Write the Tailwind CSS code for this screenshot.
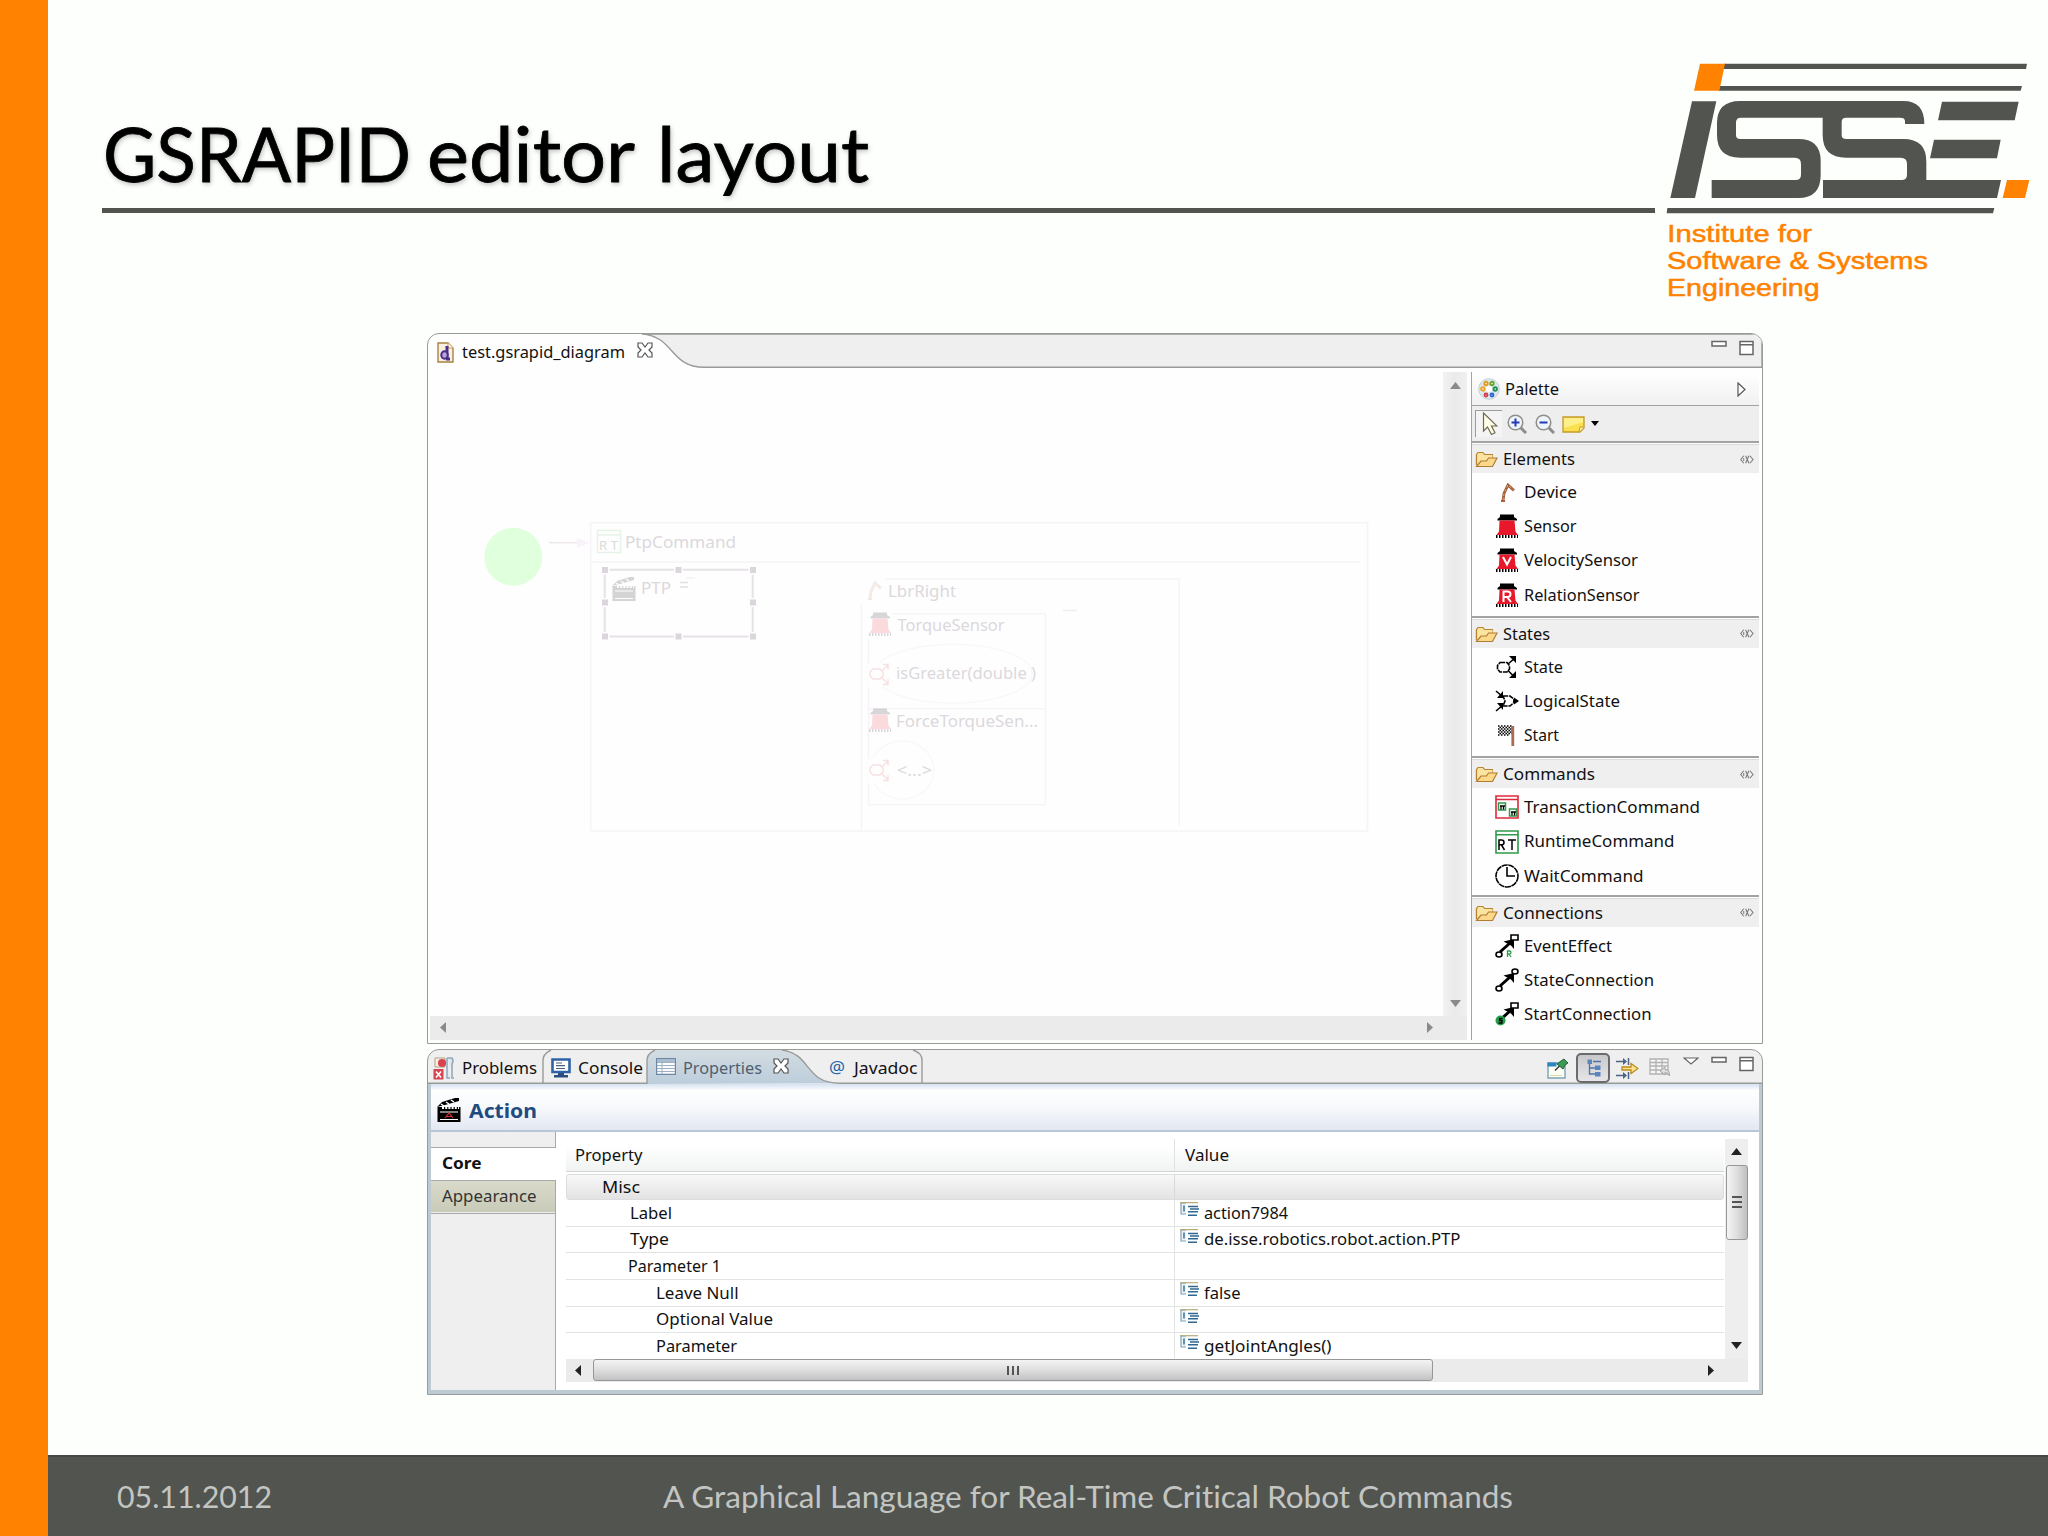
<!DOCTYPE html>
<html lang="en">
<head>
<meta charset="utf-8">
<title>GSRAPID editor layout</title>
<script src="https://cdn.jsdelivr.net/npm/@tailwindcss/browser@4"></script>
</head>
<body class="w-[2048px] h-[1536px] overflow-hidden bg-[#fdfffc]">
<svg class="hidden">
  <symbol id="folder" viewBox="0 0 23 17"><path d="M1.5 14V3.5L3 1.5h5L9.500 3.500h8V7" fill="#fbe3a2" stroke="#b8842f" stroke-width="1.200"/><path d="M1.500 14.500V4h16v3.500L11 12.500z" fill="#fbe3a2"/><path d="M1.500 15.500L6 10h5.500L13.500 7H22l-4.500 8.500z" fill="#fcd98a" stroke="#b07d33" stroke-width="1.200"/><path d="M1.500 14V3.500" stroke="#b8842f" stroke-width="1.200"/></symbol>
  <symbol id="pin" viewBox="0 0 15 11"><path d="M4 1.500L.8 5.500 4 9.500M4 3.800v3.400M6 1.500l3.500 8M9.500 1.500L6 9.500M10.500 1.500l3.500 4-3.500 4" fill="none" stroke="#777" stroke-width="1.100"/></symbol>
  <symbol id="device" viewBox="0 0 24 24"><path d="M8 20.500l1-7 4-8.500 6 5.500" fill="none" stroke="#9c5a34" stroke-width="2.800"/><path d="M8 20.500l1-7 4-8.500 6 5.500" fill="none" stroke="#e6a272" stroke-width="1" stroke-dasharray="3 1.500"/><path d="M6 21h4" stroke="#b0603a" stroke-width="2"/></symbol>
  <symbol id="sensor" viewBox="0 0 24 24"><path d="M5 .5h14v2.500l3 2v1.500H2.500V5L5 3z" fill="#000"/><path d="M4.500 6.500h15l1 11 2.500 3.500H1.500L4 17.500z" fill="#e8182a"/><path d="M1 22.500h22" stroke="#000" stroke-width="3" stroke-dasharray="1.500 1.500"/></symbol>
  <symbol id="state" viewBox="0 0 24 24"><path d="M5 7.500h7l2.500 3v3.500L12 17H5l-2.500-3v-3.500z" fill="none" stroke="#000" stroke-width="1.600" stroke-dasharray="5 .8"/><path d="M13 9l7-6M13 15.500l5 5" stroke="#000" stroke-width="1.600"/><path d="M14 1h7v7zM14 23h7v-7z" fill="#000"/></symbol>
  <symbol id="lstate" viewBox="0 0 24 24"><path d="M8 7h7l4 3v3.500L15 17H8l2-5z" fill="none" stroke="#000" stroke-width="1.600" stroke-dasharray="5 .8"/><path d="M1 2l7 6M1 22l7-6M18 12h5" stroke="#000" stroke-width="1.600"/><path d="M8 2v7H2zM8 21v-7H2zM19 8.500l5 3.500-5 3.500z" fill="#000"/></symbol>
  <symbol id="clap" viewBox="0 0 24 24"><path d="M.5 9h23v15H.5z" fill="#000"/><path d="M0 9L5 4l13-4h4v3L8 7z" fill="#000"/><path d="M4 6l3 2M9 4l3 2M14 2l3 2" stroke="#fff" stroke-width="1.500"/><path d="M5 10h17" stroke="#fff" stroke-width="2" stroke-dasharray="2 1.200"/><path d="M3 14h18M3 21.500h18" stroke="#fff" stroke-width="1.200"/></symbol>
  <symbol id="field" viewBox="0 0 19 16"><path d="M6 1H1v11h5" fill="#eaf4f6" stroke="#7fa2b4" stroke-width="1.200"/><path d="M0 .7h18" stroke="#b3ae7a" stroke-width="1.200"/><path d="M4 3.500v6M8 4.500h10M10 7h9M8 9.800h10M8 13.200h9" stroke="#2f6790" stroke-width="1.400"/></symbol>
  <symbol id="arr" viewBox="0 0 24 24"><path d="M5 18L15 9" stroke="#000" stroke-width="3"/><path d="M8.500 7.500L19 5v10l-3-3.500z" fill="#000"/></symbol>
  <symbol id="glass" viewBox="0 0 20 20"><path d="M13 13l6 6" stroke="#8c8c8c" stroke-width="3"/><circle cx="8.500" cy="8.500" r="7.300" fill="#eef4fb" stroke="#8f8f88" stroke-width="1.500"/></symbol>
</svg>

<div class="flex h-[1536px] w-[2048px] font-['Noto_Sans',sans-serif] text-[16.3px] leading-none text-[#111]">
  <aside class="w-12 shrink-0 bg-[#ff8200]"></aside>
  <div class="flex w-[2000px] flex-col">

    <header class="flex h-[333px] shrink-0 pl-[54px]">
      <div class="flex h-[212.600px] w-[1553px] items-end border-b-[5px] border-[#51544f]">
        <h1 class="flex pb-[11px] pl-[1px] text-[75px] leading-[88px] text-black font-[family-name:Lato,sans-serif] [-webkit-text-stroke:0.8px_black] [text-shadow:1px_2px_5px_rgba(0,0,0,0.28)]"><span class="w-[324px] shrink-0"><span class="inline-block origin-left whitespace-nowrap" data-w="308">GSRAPID</span> </span><span class="w-[230px] shrink-0"><span class="inline-block origin-left whitespace-nowrap" data-w="208">editor</span> </span><span class="inline-block origin-left whitespace-nowrap" data-w="212">layout</span></h1>
      </div>
      <svg class="mt-10 h-[280px] w-[393px] shrink-0" viewBox="45 0 1179 840">
        <g fill="#51544f">
          <path d="M252 71H1161L1158 87H249zM240 138H1146L1142 152H236zM82 504H1063L1059 520H80zM156 184H229L165 474H91z"/>
          <path d="M906 185H1136L1124 241H894zM882 299H1082L1071 355H870z"/>
          <path fill-rule="evenodd" d="M300 183H790Q853 183 853 252H795V243Q795 233 780 233H618Q605 233 605 246V285Q605 297 618 297H790Q859 297 859 365V420H1083L1071 474H549V420H785Q801 420 801 404V372Q801 353 782 353H618Q548 353 548 285V233H302Q288 233 288 247V285Q288 297 300 297H475Q542 297 542 362V405Q542 474 475 474H215V420H467Q483 420 483 404V372Q483 353 464 353H300Q231 353 231 285V250Q231 183 300 183z"/>
        </g>
        <path fill="#ff8200" d="M180 71H255L238 152H162zM1101 420H1168L1155 474H1088z"/>
        <g fill="#ff8200" stroke="#ff8200" stroke-width="1.600" font-family="Liberation Sans, Arial, sans-serif" font-size="74">
          <text x="82" y="606" textLength="434" lengthAdjust="spacingAndGlyphs">Institute for</text>
          <text x="81" y="688" textLength="783" lengthAdjust="spacingAndGlyphs">Software &amp; Systems</text>
          <text x="81" y="769" textLength="458" lengthAdjust="spacingAndGlyphs">Engineering</text>
        </g>
      </svg>
    </header>

    <main class="flex h-[1122px] shrink-0 flex-col gap-[5px] pl-[379px]">

      <!-- Diagram editor -->
      <section class="flex h-[711px] w-[1336px] flex-col overflow-hidden rounded-t-[12px] border-[1.500px] border-[#999b98] bg-[#fefefe]">
        <div class="relative h-[34px] shrink-0">
          <svg class="absolute inset-0" width="1334" height="34" viewBox="0 0 1334 34"><path d="M214 0C246 2 242 33.300 276 33.300H1334V0z" fill="#eeefee" stroke="#999b98" stroke-width="1.400"/></svg>
          <div class="relative flex h-full items-center pl-[9px] pr-[7px] pt-[2px]">
            <svg class="h-[21px] w-[17px]" viewBox="0 0 17 21"><path d="M1 1h10l5 5v14H1z" fill="#f6efe4" stroke="#a8823e" stroke-width="1.400"/><path d="M11 1v5h5" fill="#fff" stroke="#c99b4a"/><path d="M10 4v13M13 17H9" stroke="#4a2d86" stroke-width="3"/><ellipse cx="7.500" cy="13" rx="3.200" ry="3.800" fill="#b9a5dd" stroke="#4a2d86" stroke-width="2"/></svg>
            <span class="ml-[8px] w-[175px] shrink-0"><span class="inline-block origin-left whitespace-nowrap" data-w="163">test.gsrapid_diagram</span></span>
            <svg class="mb-1 h-[16px] w-[16px]" viewBox="0 0 16 16"><path d="M1 1h4l3 4 3-4h4v4l-3 3 3 3v4h-4l-3-4-3 4H1v-4l3-3-3-3z" fill="#fff" stroke="#555" stroke-width="1.200"/></svg>
            <svg class="ml-auto mb-[8px] h-[16px] w-[44px]" viewBox="0 0 44 16"><path d="M1 1.500h14v4.500H1zM29 1.500h13v13H29zM29 4.800h13" fill="#fff" stroke="#666" stroke-width="1.500"/></svg>
          </div>
        </div>
        <div class="flex h-[675px] pt-[4px]">
          <div class="flex w-[1039px] shrink-0 flex-col pl-[2px]">
            <div class="flex h-[644px]">
              <svg class="h-[644px] w-[1013px]" viewBox="430 372 1013 644" font-family="Noto Sans, sans-serif" font-size="16.300" fill="#dcd8dc">
                <circle cx="513.300" cy="556.700" r="29" fill="#e0ffdc"/>
                <path d="M549 542.700h30" stroke="#eee8ee" stroke-width="1.500"/><path d="M577 538l13 4.700-13 4.700z" fill="#f7f3f8"/>
                <g fill="none" stroke="#f7f3f8" stroke-width="1.500"><path d="M590.700 522.700H1367.500V831H590.700zM592 562H1360M881 579H1179.300V826M861.400 603V831M1045.400 613.700V804.700H868.600V640M892 613.700H1045.400M868.600 708.700H1045.400"/><path d="M1063 610.500h14" stroke="#eee"/><ellipse cx="953" cy="673.700" rx="79" ry="29.500" stroke="#faf7fb"/><ellipse cx="902" cy="770" rx="32" ry="29" stroke="#faf7fb"/></g>
                <path d="M597.500 530.500h23v22h-23zM597.500 535h23" fill="#fefefe" stroke="#e6f3e8" stroke-width="1.500"/>
                <text x="599" y="549.500" font-size="13" textLength="19" >RT</text>
                <text x="625" y="548" textLength="111" lengthAdjust="spacingAndGlyphs">PtpCommand</text>
                <path d="M604.700 569.700h148v66.800h-148z" fill="none" stroke="#e6e2e7" stroke-width="2"/>
                <g fill="#dad6dc" stroke="#fefefe" stroke-width="3" paint-order="stroke"><path d="M602 567h6v6h-6zM675.500 567h6v6h-6zM750 567h6v6h-6zM602 599.500h6v6h-6zM750 599.500h6v6h-6zM602 633.500h6v6h-6zM675.500 633.500h6v6h-6zM750 633.500h6v6h-6z"/></g>
                <use href="#clap" x="612" y="577" width="24" height="24" opacity=".16"/>
                <text x="641" y="594" textLength="30" lengthAdjust="spacingAndGlyphs">PTP</text>
                <path d="M680 582.500h8M680 587h8" stroke="#e3dfe4" stroke-width="1.400"/><path d="M686 578h9" stroke="#f3f0f4" stroke-width="1.400"/>
                <rect x="866" y="578" width="20" height="24" fill="#fefefe"/><use href="#device" x="862" y="578" width="24" height="24" opacity=".13"/>
                <text x="888" y="596.500" textLength="68" lengthAdjust="spacingAndGlyphs">LbrRight</text>
                <use href="#sensor" x="868" y="612" width="24" height="24" opacity=".15"/>
                <text x="897.500" y="630.500" textLength="107" lengthAdjust="spacingAndGlyphs">TorqueSensor</text>
                <rect x="867" y="663" width="24" height="24" fill="#fefefe"/>
                <path d="M873 669h7l3 3v4l-3 3h-7l-3-3v-4zM882 671l6-6M882 678l6 6M883 664.500h5v5M888 679v5.500h-5" fill="none" stroke="#f8e0e2" stroke-width="1.400"/>
                <text x="896" y="679" textLength="140" lengthAdjust="spacingAndGlyphs">isGreater(double )</text>
                <use href="#sensor" x="868" y="708" width="24" height="24" opacity=".15"/>
                <text x="896" y="727" textLength="142" lengthAdjust="spacingAndGlyphs">ForceTorqueSen...</text>
                <rect x="867" y="759" width="24" height="24" fill="#fefefe"/>
                <path d="M873 765h7l3 3v4l-3 3h-7l-3-3v-4zM882 767l6-6M882 774l6 6M883 760.500h5v5M888 775v5.500h-5" fill="none" stroke="#f8e0e2" stroke-width="1.400"/>
                <text x="897" y="775.500" textLength="35" lengthAdjust="spacingAndGlyphs">&lt;...&gt;</text>
              </svg>
              <div class="flex w-[24px] flex-col items-center justify-between bg-linear-to-r from-[#f3f2f3] via-[#ebeaeb] to-[#f1f0f1] pt-[10px] pb-[9px]">
                <svg width="11" height="7" viewBox="0 0 11 7"><path d="M0 7L5.500 0 11 7z" fill="#8a8a8a"/></svg>
                <svg width="11" height="7" viewBox="0 0 11 7"><path d="M0 0L5.500 7 11 0z" fill="#8a8a8a"/></svg>
              </div>
            </div>
            <div class="flex h-[24px] w-[1037px] items-center justify-between bg-[#ecebec] pl-[10px] pr-[34px] pb-[2px]">
              <svg width="6" height="11" viewBox="0 0 6 11"><path d="M6 0L0 5.500 6 11z" fill="#8a8a8a"/></svg>
              <svg width="6" height="11" viewBox="0 0 6 11"><path d="M0 0L6 5.500 0 11z" fill="#8a8a8a"/></svg>
            </div>
          </div>

          <!-- Palette -->
          <div class="ml-[4px] flex h-[668px] w-[288px] flex-col border-l-[1.500px] border-[#a3a3a3]">
            <div class="flex h-[34px] shrink-0 items-center border-b-[1.500px] border-[#a3a3a3] bg-linear-to-b from-white to-[#f1f1f1] pl-[6px]">
              <svg class="h-[22px] w-[22px]" viewBox="0 0 22 22"><circle cx="11" cy="11" r="10.300" fill="#dbe8ee" stroke="#c3cfdb"/><circle cx="11" cy="11" r="3" fill="#fff"/><g fill="#fff" stroke-width="1.900"><circle cx="8" cy="5.500" r="1.700" stroke="#e79b1f"/><circle cx="14" cy="5.500" r="1.700" stroke="#6aa52c"/><circle cx="4.800" cy="11" r="1.700" stroke="#efa51d"/><circle cx="17.200" cy="11" r="1.700" stroke="#23914e"/><circle cx="8" cy="17" r="1.500" stroke="#d5394a"/><circle cx="14" cy="17" r="1.500" stroke="#2d66c9"/></g></svg>
              <span class="ml-[5px] mt-[2px]"><span class="inline-block origin-left whitespace-nowrap" data-w="54">Palette</span></span>
              <svg class="mr-[13px] ml-auto mt-[2px]" width="9" height="15" viewBox="0 0 9 15"><path d="M1 1l7 6.500L1 14z" fill="#fff" stroke="#555" stroke-width="1.200"/></svg>
            </div>
            <div class="flex h-[35px] shrink-0 items-center bg-[#efeeef] pl-[3px]">
              <div class="flex h-[27px] w-[27px] items-center justify-center border-t-[1.500px] border-l-[1.500px] border-[#9c9c9c] bg-[#f5f4f5] pl-[2px]"><svg width="16" height="24" viewBox="0 0 16 24"><path d="M1.500 1v18l4-4 4 7.500 3.500-1.800L9.500 14H15z" fill="#fffde8" stroke="#6d6a50" stroke-width="1.200"/></svg></div>
              <svg class="ml-[5px] h-[20px] w-[20px]" viewBox="0 0 20 20"><use href="#glass"/><path d="M4.500 8.500h8M8.500 4.500v8" stroke="#2438b4" stroke-width="2"/></svg>
              <svg class="ml-[8px] h-[20px] w-[20px]" viewBox="0 0 20 20"><use href="#glass"/><path d="M4.500 8.500h8" stroke="#2438b4" stroke-width="2"/></svg>
              <svg class="ml-[7px] mt-[2px] h-[17px] w-[23px]" viewBox="0 0 23 17"><path d="M1 1h21v11l-4 4H1z" fill="#fbe04d" stroke="#c59a2b" stroke-width="1.300"/><path d="M2 2h19v4L2 12z" fill="#fdf08c"/><path d="M17 16l1-5h4" fill="#fff5b5" stroke="#c59a2b"/></svg>
              <svg class="ml-[6px]" width="8" height="5" viewBox="0 0 8 5"><path d="M0 0h8L4 5z" fill="#000"/></svg>
            </div>

            <div class="border-t-[2px] border-[#a3a3a3] pb-[3px]">
              <div class="mt-[1px] mb-[2px] flex h-[29px] items-center border-t border-[#dcdcdc] bg-[#f0eff0] pl-[3px] pr-[5px]"><svg class="mt-[1px] h-[17px] w-[23px]"><use href="#folder"/></svg><span class="ml-[5px]"><span class="inline-block origin-left whitespace-nowrap" data-w="72">Elements</span></span><svg class="ml-auto h-[11px] w-[14px]"><use href="#pin"/></svg></div>
              <div class="flex h-[34.200px] items-center gap-[5px] pl-[23px]"><svg class="h-[24px] w-[24px]"><use href="#device"/></svg><span><span class="inline-block origin-left whitespace-nowrap" data-w="53">Device</span></span></div>
              <div class="flex h-[34.200px] items-center gap-[5px] pl-[23px]"><svg class="h-[24px] w-[24px]"><use href="#sensor"/></svg><span><span class="inline-block origin-left whitespace-nowrap" data-w="52.500">Sensor</span></span></div>
              <div class="flex h-[34.200px] items-center gap-[5px] pl-[23px]"><svg class="h-[24px] w-[24px]"><use href="#sensor"/><path d="M8 9l4 7.500L16 9" fill="none" stroke="#fff" stroke-width="2"/></svg><span><span class="inline-block origin-left whitespace-nowrap" data-w="114">VelocitySensor</span></span></div>
              <div class="flex h-[34.200px] items-center gap-[5px] pl-[23px]"><svg class="h-[24px] w-[24px]"><use href="#sensor"/><path d="M8.500 19V8.500h4q3 0 3 2.700t-3 2.700h-4M12 14l4 5" fill="none" stroke="#fff" stroke-width="2"/></svg><span><span class="inline-block origin-left whitespace-nowrap" data-w="115.500">RelationSensor</span></span></div>
            </div>
            <div class="mt-[1px] border-t-[2px] border-[#a3a3a3] pb-[3px]">
              <div class="mt-[1px] mb-[2px] flex h-[29px] items-center border-t border-[#dcdcdc] bg-[#f0eff0] pl-[3px] pr-[5px]"><svg class="mt-[1px] h-[17px] w-[23px]"><use href="#folder"/></svg><span class="ml-[5px]"><span class="inline-block origin-left whitespace-nowrap" data-w="47">States</span></span><svg class="ml-auto h-[11px] w-[14px]"><use href="#pin"/></svg></div>
              <div class="flex h-[34.200px] items-center gap-[5px] pl-[23px]"><svg class="h-[24px] w-[24px]"><use href="#state"/></svg><span><span class="inline-block origin-left whitespace-nowrap" data-w="39">State</span></span></div>
              <div class="flex h-[34.200px] items-center gap-[5px] pl-[23px]"><svg class="h-[24px] w-[24px]"><use href="#lstate"/></svg><span><span class="inline-block origin-left whitespace-nowrap" data-w="96">LogicalState</span></span></div>
              <div class="flex h-[34.200px] items-center gap-[5px] pl-[23px]"><svg class="h-[24px] w-[24px]" viewBox="0 0 24 24"><path d="M3 3h14M3 6h14M3 9h14M3 12h12" stroke="#000" stroke-width="1.500" stroke-dasharray="1.500 1.500"/><path d="M4.500 4.500h13M4.500 7.500h13M4.500 10.500h13" stroke="#000" stroke-width="1.500" stroke-dasharray="1.500 1.500"/><path d="M17.800 3v20" stroke="#a96c55" stroke-width="2.800"/></svg><span><span class="inline-block origin-left whitespace-nowrap" data-w="35">Start</span></span></div>
            </div>
            <div class="mt-[1px] border-t-[2px] border-[#a3a3a3] pb-[2px]">
              <div class="mt-[1px] mb-[2px] flex h-[29px] items-center border-t border-[#dcdcdc] bg-[#f0eff0] pl-[3px] pr-[5px]"><svg class="mt-[1px] h-[17px] w-[23px]"><use href="#folder"/></svg><span class="ml-[5px]"><span class="inline-block origin-left whitespace-nowrap" data-w="92">Commands</span></span><svg class="ml-auto h-[11px] w-[14px]"><use href="#pin"/></svg></div>
              <div class="flex h-[34.200px] items-center gap-[5px] pl-[23px]"><svg class="h-[24px] w-[24px]" viewBox="0 0 24 24"><path d="M1 1h22v22H1zM1 4.500h22" fill="#fff" stroke="#e0293d" stroke-width="1.600"/><path d="M3.500 8h7v7h-7zM14.500 14h7v7h-7z" fill="#fff" stroke="#2f9a4b" stroke-width="1.500"/><path d="M5 11h5M6 11v3.500M8.500 11v3.500M16 17h5M17 17v3.500M19.500 17v3.500" stroke="#000" stroke-width="1.300"/></svg><span><span class="inline-block origin-left whitespace-nowrap" data-w="176">TransactionCommand</span></span></div>
              <div class="flex h-[34.200px] items-center gap-[5px] pl-[23px]"><svg class="h-[24px] w-[24px]" viewBox="0 0 24 24"><path d="M1 1h22v22H1zM1 4.800h22" fill="#fff" stroke="#2f9a4b" stroke-width="1.600"/><path d="M4 20v-10h2.500q2.500 0 2.500 2.400t-2.500 2.400H4M6.500 15l3 5M13 10h8M17 10v10" fill="none" stroke="#000" stroke-width="1.500"/></svg><span><span class="inline-block origin-left whitespace-nowrap" data-w="150.500">RuntimeCommand</span></span></div>
              <div class="flex h-[34.200px] items-center gap-[5px] pl-[23px]"><svg class="h-[24px] w-[24px]" viewBox="0 0 24 24"><circle cx="12" cy="12" r="11" fill="#fff" stroke="#000" stroke-width="1.600" stroke-dasharray="6 .6"/><path d="M12 3v9h8" fill="none" stroke="#000" stroke-width="1.600"/></svg><span><span class="inline-block origin-left whitespace-nowrap" data-w="119.500">WaitCommand</span></span></div>
            </div>
            <div class="border-t-[2px] border-[#a3a3a3]">
              <div class="mt-[1px] mb-[2px] flex h-[29px] items-center border-t border-[#dcdcdc] bg-[#f0eff0] pl-[3px] pr-[5px]"><svg class="mt-[1px] h-[17px] w-[23px]"><use href="#folder"/></svg><span class="ml-[5px]"><span class="inline-block origin-left whitespace-nowrap" data-w="100">Connections</span></span><svg class="ml-auto h-[11px] w-[14px]"><use href="#pin"/></svg></div>
              <div class="flex h-[34.200px] items-center gap-[5px] pl-[23px]"><svg class="h-[24px] w-[24px]" viewBox="0 0 24 24"><use href="#arr"/><path d="M16 1h7v5h-7z" fill="#fff" stroke="#000" stroke-width="1.600"/><ellipse cx="4" cy="20.500" rx="3" ry="2.500" fill="#fff" stroke="#000" stroke-width="1.600"/><path d="M12.500 23v-6h2q1.500 0 1.500 1.500T14.500 20h-2M14 20l2 3" fill="none" stroke="#2f9a4b" stroke-width="1.300"/></svg><span><span class="inline-block origin-left whitespace-nowrap" data-w="88">EventEffect</span></span></div>
              <div class="flex h-[34.200px] items-center gap-[5px] pl-[23px]"><svg class="h-[24px] w-[24px]" viewBox="0 0 24 24"><use href="#arr"/><ellipse cx="20" cy="3.500" rx="3" ry="2.500" fill="#fff" stroke="#000" stroke-width="1.600"/><ellipse cx="4" cy="20.500" rx="3" ry="2.500" fill="#fff" stroke="#000" stroke-width="1.600"/></svg><span><span class="inline-block origin-left whitespace-nowrap" data-w="130">StateConnection</span></span></div>
              <div class="flex h-[34.200px] items-center gap-[5px] pl-[23px]"><svg class="h-[24px] w-[24px]" viewBox="0 0 24 24"><use href="#arr"/><path d="M16 1h7v5h-7z" fill="#fff" stroke="#000" stroke-width="1.600"/><circle cx="5.500" cy="18.500" r="5" fill="#25a04a"/><path d="M7.500 16.500h-3v2h2.500v2.500H3.500" fill="none" stroke="#000" stroke-width="1.300"/></svg><span><span class="inline-block origin-left whitespace-nowrap" data-w="127.500">StartConnection</span></span></div>
            </div>
          </div>
        </div>
      </section>

      <!-- Properties view -->
      <section class="flex h-[346px] w-[1336px] flex-col overflow-hidden rounded-t-[12px] border-[1.500px] border-[#999b98] bg-[#f0eff0]">
        <div class="relative h-[34px] shrink-0">
          <svg class="absolute inset-0" width="1334" height="34" viewBox="0 0 1334 34"><defs><linearGradient id="tabg" x2="0" y2="1"><stop stop-color="#d3dce2"/><stop offset="1" stop-color="#bccddb"/></linearGradient></defs><path d="M219 34V10Q219 4 227 0H354C384 4 376 33.300 412 33.300z" fill="url(#tabg)"/><path d="M0 33.300H219V10Q219 4 227 0M354 0C384 4 376 33.300 412 33.300H1334M115 33.300V10Q115 4 123 0M485 0Q494 3 494 10V33" fill="none" stroke="#999b98" stroke-width="1.400"/></svg>
          <div class="relative flex h-full items-center pl-[5px] pr-[7px] pt-[2px]">
            <svg class="h-[23px] w-[22px] shrink-0" viewBox="0 0 22 23"><path d="M2 1h10v9H2z" fill="#f7eee4" stroke="#b5a184"/><circle cx="9" cy="6" r="4" fill="#d9434c"/><path d="M14 1h5q2 3 0 6v14h2M14 1v20h3" fill="#dfe9f1" stroke="#8fa6b8" stroke-width="1.500"/><path d="M.5 12h10v10.500H.5z" fill="#d64550"/><path d="M3 14.500l5 6M8 14.500l-5 6" stroke="#fff" stroke-width="1.600"/></svg>
            <span class="ml-[7px] w-[89px] shrink-0"><span class="inline-block origin-left whitespace-nowrap" data-w="75">Problems</span></span>
            <svg class="h-[20px] w-[20px] shrink-0" viewBox="0 0 20 20"><path d="M1.500 1.500h17v12.500h-17z" fill="#fff" stroke="#2f62a4" stroke-width="2.600"/><path d="M5 5h6M5 7.700h9M5 10.500h9" stroke="#4a5f7c" stroke-width="1.200"/><path d="M7 15h6v2h4v2.500H3V17h4z" fill="#2b4c80"/></svg>
            <span class="ml-[7px] w-[78px] shrink-0"><span class="inline-block origin-left whitespace-nowrap" data-w="65">Console</span></span>
            <svg class="mb-[4px] h-[17px] w-[20px] shrink-0" viewBox="0 0 20 17"><path d="M.6.600h18.800v15.800H.6z" fill="#fbfcfd" stroke="#6d87a3" stroke-width="1.200"/><path d="M1 1h18v3H1z" fill="#a8bccd"/><path d="M1 4.500h18M6 4v12M1 7.500h18M1 10.500h18M1 13.500h18" stroke="#9eb0c0" stroke-width="1"/></svg>
            <span class="ml-[7px] w-[90px] shrink-0 text-[#4f5f70]"><span class="inline-block origin-left whitespace-nowrap" data-w="79">Properties</span></span>
            <svg class="mb-1 h-[16px] w-[16px] shrink-0" viewBox="0 0 16 16"><path d="M1 1h4l3 4 3-4h4v4l-3 3 3 3v4h-4l-3-4-3 4H1v-4l3-3-3-3z" fill="#fff" stroke="#555" stroke-width="1.200"/></svg>
            <span class="ml-[40px] mb-1 w-[25px] shrink-0 text-[17px] text-[#2467a8]"><span class="inline-block origin-left whitespace-nowrap" data-w="16">@</span></span>
            <span><span class="inline-block origin-left whitespace-nowrap" data-w="63.500">Javadoc</span></span>
            <div class="ml-auto flex items-center">
              <svg class="h-[21px] w-[21px]" viewBox="0 0 21 21"><path d="M1 5h17v15H1z" fill="#fbfdf5" stroke="#79a3b4" stroke-width="1.400"/><path d="M.5 4.500h9v4h-9z" fill="#2c86bd"/><path d="M3 17.500h12" stroke="#e0d9a5"/><path d="M8 12.500l5-5" stroke="#333" stroke-width="1.500"/><path d="M10 6l4-3 3-2 4 4-3 2-2 4z" fill="#3c9a56" stroke="#1d6238"/></svg>
              <div class="ml-[8px] flex h-[30px] w-[34px] items-center justify-center rounded-[5px] border-[2px] border-[#6a6b6e] bg-linear-to-b from-[#c9c9cc] to-[#e6e6e9]"><svg class="ml-[2px]" width="15" height="18" viewBox="0 0 15 18"><path d="M2.500 3v12H9M2.500 9H9M6 2.500h8" fill="none" stroke="#4c73a8" stroke-width="1.300"/><path d="M.5.500h4.500v4.500H.5zM8 6.500h5.500V11H8zM8 13h5.500v4.500H8z" fill="#5b86bd"/></svg></div>
              <svg class="ml-[6px] h-[23px] w-[23px]" viewBox="0 0 23 23"><path d="M0 4.500h9M0 18.500h9M12.500 1v7M12.500 15v7" stroke="#4b6384" stroke-width="1.500"/><path d="M7 1l4 3.500-4 3.500zM7 15l4 3.500-4 3.500z" fill="#4b6384"/><path d="M6 10h9V6.500l7 5-7 5V13H6z" fill="#fbe28b" stroke="#b98a1d" stroke-width="1.300"/></svg>
              <svg class="ml-[10px] h-[20px] w-[22px]" viewBox="0 0 22 20"><path d="M1 1h18v15H1zM1 4.500h18M7 1v15M13 1v15M1 8h18M1 12h18" fill="#f6f6f6" stroke="#b2b2b2" stroke-width="1.300"/><path d="M11 13l5-4v2.500q5 0 4.500 6.500-1-3.500-4.500-3.500V17z" fill="#ddd" stroke="#a5a5a5"/></svg>
              <svg class="ml-[12px] mb-[15px]" width="16" height="8" viewBox="0 0 16 8"><path d="M1 1h14L8 7z" fill="#fff" stroke="#666" stroke-width="1.200"/></svg>
              <svg class="mb-[8px] ml-[12px] h-[16px] w-[44px]" viewBox="0 0 44 16"><path d="M1 1.500h14v4.500H1zM29 1.500h13v13H29zM29 4.800h13" fill="#fff" stroke="#666" stroke-width="1.500"/></svg>
            </div>
          </div>
        </div>
        <div class="flex h-[310px] flex-col border-x-[3px] border-b-[4px] border-[#bccad4] bg-white">
          <div class="flex h-[47.500px] shrink-0 items-center border-b-[2px] border-[#bac6d5] bg-[linear-gradient(#d5e2f1_0,#fdfefe_14%,#f8f9fc_50%,#e2e7f2)] pl-[6px] pt-[6px]">
            <svg class="h-[24px] w-[24px]" viewBox="0 0 24 24"><use href="#clap"/><path d="M8 20l4-5 4 5M9 18.500h6" fill="none" stroke="#d42a35" stroke-width="1.200"/></svg>
            <span class="ml-[8px] mt-[2px] text-[20px] font-bold text-[#1f4c80]"><span class="inline-block origin-left whitespace-nowrap" data-w="68">Action</span></span>
          </div>
          <div class="flex h-[258.500px]">
            <div class="flex h-full w-[125px] shrink-0 flex-col">
              <div class="h-[16px] shrink-0 border-r-[1.500px] border-b-[1.500px] border-[#a8a8a8] bg-[#f0eff0]"></div>
              <div class="flex h-[32px] shrink-0 items-center pl-[11px] text-[16.500px] font-bold"><span class="inline-block origin-left whitespace-nowrap" data-w="39.500">Core</span></div>
              <div class="flex h-[32px] shrink-0 items-center border-t-[1.500px] border-r-[1.500px] border-[#a8a8a8] bg-linear-to-b from-[#d9dac9] to-[#c9cbb9] pl-[11px] text-[#333]"><span class="inline-block origin-left whitespace-nowrap" data-w="94.500">Appearance</span></div>
              <div class="flex-1 border-r-[1.500px] border-[#a8a8a8] bg-[#f0eff0] pt-[1px]"><div class="h-[1.500px] bg-[#a8a8a8]"></div></div>
            </div>
            <div class="flex w-[1192px] shrink-0 flex-col pt-[7px] pl-[10px]">
              <div class="flex h-[220px]">
                <div class="w-[1158px] shrink-0">
                  <div class="flex h-[33px] items-center border-b-[1.500px] border-[#d3d5d6] bg-linear-to-b from-white from-20% to-[#f1f3f3]">
                    <div class="flex h-full w-[609px] items-center border-r border-[#dfe1e2] pl-[9px] pt-[2px]"><span class="inline-block origin-left whitespace-nowrap" data-w="67.500">Property</span></div><div class="pl-[10px] pt-[2px]"><span class="inline-block origin-left whitespace-nowrap" data-w="44">Value</span></div>
                  </div>
                  <div class="mt-[2px] flex h-[26.500px] items-center rounded-[3px] border border-[#dcddde] bg-linear-to-b from-[#f8f8f8] to-[#e3e3e4]">
                    <div class="flex h-full w-[608px] items-center border-r border-[#d9d9da] pl-[35px]"><span class="inline-block origin-left whitespace-nowrap" data-w="38">Misc</span></div>
                  </div>
                  <div class="flex h-[26.700px] items-center border-b-[1.500px] border-[#e2e3e3]"><div class="flex h-full w-[609px] items-center border-r-[1.500px] border-[#e2e3e3] pl-[64px]"><span class="inline-block origin-left whitespace-nowrap" data-w="42">Label</span></div><svg class="mb-[5px] ml-[5px] h-[16px] w-[19px]"><use href="#field"/></svg><span class="ml-[5px]"><span class="inline-block origin-left whitespace-nowrap" data-w="84">action7984</span></span></div>
                  <div class="flex h-[26.700px] items-center border-b-[1.500px] border-[#e2e3e3]"><div class="flex h-full w-[609px] items-center border-r-[1.500px] border-[#e2e3e3] pl-[64px]"><span class="inline-block origin-left whitespace-nowrap" data-w="39">Type</span></div><svg class="mb-[5px] ml-[5px] h-[16px] w-[19px]"><use href="#field"/></svg><span class="ml-[5px]"><span class="inline-block origin-left whitespace-nowrap" data-w="256.500">de.isse.robotics.robot.action.PTP</span></span></div>
                  <div class="flex h-[26.700px] items-center border-b-[1.500px] border-[#e2e3e3]"><div class="flex h-full w-[609px] items-center border-r-[1.500px] border-[#e2e3e3] pl-[62px]"><span class="inline-block origin-left whitespace-nowrap" data-w="93">Parameter 1</span></div></div>
                  <div class="flex h-[26.700px] items-center border-b-[1.500px] border-[#e2e3e3]"><div class="flex h-full w-[609px] items-center border-r-[1.500px] border-[#e2e3e3] pl-[90px]"><span class="inline-block origin-left whitespace-nowrap" data-w="82.500">Leave Null</span></div><svg class="mb-[5px] ml-[5px] h-[16px] w-[19px]"><use href="#field"/></svg><span class="ml-[5px]"><span class="inline-block origin-left whitespace-nowrap" data-w="36.500">false</span></span></div>
                  <div class="flex h-[26.700px] items-center border-b-[1.500px] border-[#e2e3e3]"><div class="flex h-full w-[609px] items-center border-r-[1.500px] border-[#e2e3e3] pl-[90px]"><span class="inline-block origin-left whitespace-nowrap" data-w="117">Optional Value</span></div><svg class="mb-[5px] ml-[5px] h-[16px] w-[19px]"><use href="#field"/></svg></div>
                  <div class="flex h-[25px] items-center"><div class="flex h-full w-[609px] items-center border-r-[1.500px] border-[#e2e3e3] pl-[90px]"><span class="inline-block origin-left whitespace-nowrap" data-w="81">Parameter</span></div><svg class="mb-[5px] ml-[5px] h-[16px] w-[19px]"><use href="#field"/></svg><span class="ml-[5px]"><span class="inline-block origin-left whitespace-nowrap" data-w="127.500">getJointAngles()</span></span></div>
                </div>
                <div class="ml-[1px] flex h-[220px] w-[23px] flex-col items-center bg-[#efeeef] pt-[9px] pb-[10px]">
                  <svg width="11" height="7" viewBox="0 0 11 7"><path d="M0 7L5.500 0 11 7z" fill="#222"/></svg>
                  <div class="mt-[10px] flex h-[75px] w-[22px] flex-col items-center justify-center gap-[3px] rounded-[3px] border-[1.500px] border-[#979797] bg-linear-to-r from-[#f4f4f4] via-[#dededf] to-[#bfbfc1]"><i class="h-[2px] w-[10px] bg-[#555]"></i><i class="h-[2px] w-[10px] bg-[#555]"></i><i class="h-[2px] w-[10px] bg-[#555]"></i></div>
                  <svg class="mt-auto" width="11" height="7" viewBox="0 0 11 7"><path d="M0 0L5.500 7 11 0z" fill="#222"/></svg>
                </div>
              </div>
              <div class="flex h-[23px] w-[1182px] items-center bg-[#ecebec] pl-[9px]">
                <svg width="6" height="11" viewBox="0 0 6 11"><path d="M6 0L0 5.500 6 11z" fill="#222"/></svg>
                <div class="ml-[12px] flex h-[22px] w-[840px] items-center justify-center gap-[3px] rounded-[3px] border-[1.500px] border-[#979797] bg-linear-to-b from-[#f4f4f4] via-[#dededf] to-[#c2c2c4]"><i class="h-[9px] w-[2px] bg-[#555]"></i><i class="h-[9px] w-[2px] bg-[#555]"></i><i class="h-[9px] w-[2px] bg-[#555]"></i></div>
                <svg class="ml-[275px]" width="6" height="11" viewBox="0 0 6 11"><path d="M0 0L6 5.500 0 11z" fill="#222"/></svg>
              </div>
            </div>
          </div>
        </div>
      </section>
    </main>

    <footer class="flex h-[81px] shrink-0 items-center border-t-[2px] border-[#454845] bg-[#51544f] pl-[69px] text-[31px] text-[#c3c5c2] font-[family-name:Lato,sans-serif] [font-variant-ligatures:none]">
      <div class="w-[546px] shrink-0"><span class="inline-block origin-left whitespace-nowrap" data-w="155">05.11.2012</span></div>
      <div><span class="inline-block origin-left whitespace-nowrap" data-w="850">A Graphical Language for Real-Time Critical Robot Commands</span></div>
    </footer>
  </div>
</div>
<script>
// Condense each label horizontally to the width in data-w, again whenever its layout width changes.
var fit = new ResizeObserver(function (entries) {
  entries.forEach(function (e) {
    if (e.contentRect.width) {
      e.target.style.transform = 'scaleX(' + parseFloat(e.target.dataset.w) / e.contentRect.width + ')';
    }
  });
});
document.querySelectorAll('[data-w]').forEach(function (el) { fit.observe(el); });
</script>
</body>
</html>
